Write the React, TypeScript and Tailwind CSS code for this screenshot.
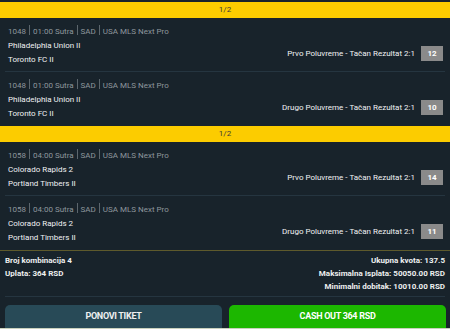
import React from "react";

type Bet = { id: string; time: string; home: string; away: string; market: string; odd: string };

const groups: Bet[][] = [
  [
    { id: "1048", time: "01:00 Sutra", home: "Philadelphia Union II", away: "Toronto FC II", market: "Prvo Poluvreme - Tačan Rezultat 2:1", odd: "12" },
    { id: "1048", time: "01:00 Sutra", home: "Philadelphia Union II", away: "Toronto FC II", market: "Drugo Poluvreme - Tačan Rezultat 2:1", odd: "10" },
  ],
  [
    { id: "1058", time: "04:00 Sutra", home: "Colorado Rapids 2", away: "Portland Timbers II", market: "Prvo Poluvreme - Tačan Rezultat 2:1", odd: "14" },
    { id: "1058", time: "04:00 Sutra", home: "Colorado Rapids 2", away: "Portland Timbers II", market: "Drugo Poluvreme - Tačan Rezultat 2:1", odd: "11" },
  ],
];

function Sep() {
  return <span className="inline-block w-px h-[10px] bg-[#5c666d] mx-[3px] align-[-1px]" />;
}

function Row({ b, last }: { b: Bet; last: boolean }) {
  return (
    <div className="px-[5px]">
      <div className={`flex h-[54px] ${last ? "" : "border-b border-[#253540]"}`}>
        <div className="flex-1 pt-[7px] pl-[3px]">
          <div className="h-[14px] leading-[14px] text-[8px] text-[#8e979d]">
            {b.id}
            <Sep />
            {b.time}
            <Sep />
            SAD
            <Sep />
            USA MLS Next Pro
          </div>
          <div className="h-[14px] leading-[14px] text-[8px] text-[#f0f2f3]">{b.home}</div>
          <div className="h-[13px] leading-[13px] text-[8px] text-[#f0f2f3]">{b.away}</div>
        </div>
        <div className="flex items-center gap-[6px] mt-[28px] self-start pr-[2px]">
          <span className="text-[8px] text-[#f0f2f3] leading-[15px]">{b.market}</span>
          <span className="w-[22px] h-[15px] bg-[#8a8a8a] text-white text-[8px] font-bold flex items-center justify-center">
            {b.odd}
          </span>
        </div>
      </div>
    </div>
  );
}

export default function App() {
  return (
    <div className="w-[450px] h-[329px] bg-[#18232b] font-[Roboto,sans-serif] overflow-hidden flex flex-col">
      <div className="h-[2px]" />
      {groups.map((g, gi) => (
        <div key={gi}>
          <div className="h-[16px] bg-[#fccc00] flex items-center justify-center text-[8px] text-[#3a3a3a]">1/2</div>
          {g.map((b, i) => (
            <Row key={i} b={b} last={i === g.length - 1} />
          ))}
        </div>
      ))}
      <div className="h-px bg-[#5e5a2c]" />
      <div className="flex justify-between px-[5px] pt-[3px]">
        <div className="text-[8px] font-bold text-[#eef0f0]">
          <div className="h-[13px] leading-[13px]">Broj kombinacija 4</div>
          <div className="h-[13px] leading-[13px]">Uplata: 364 RSD</div>
        </div>
        <div className="text-[8px] font-bold text-[#eef0f0] text-right">
          <div className="h-[13px] leading-[13px]">Ukupna kvota: 137.5</div>
          <div className="h-[13px] leading-[13px]">Maksimalna Isplata: 50050.00 RSD</div>
          <div className="h-[13px] leading-[13px]">Minimalni dobitak: 10010.00 RSD</div>
        </div>
      </div>
      <div className="mx-[5px] mt-[3px] h-px bg-[#253540]" />
      <div className="flex gap-[7px] px-[5px] pt-[8px] pr-[4px]">
        <div className="flex-1 h-[23px] rounded-t-[5px] bg-[#284a57] flex items-center justify-center text-[9px] tracking-[-0.3px] font-bold text-[#eef0f0]">
          PONOVI TIKET
        </div>
        <div className="flex-1 h-[23px] rounded-t-[5px] bg-[#1cb700] flex items-center justify-center text-[9px] tracking-[-0.3px] font-bold text-white">
          CASH OUT 364 RSD
        </div>
      </div>
      <div className="h-px bg-[#c9d1bd]" />
    </div>
  );
}
